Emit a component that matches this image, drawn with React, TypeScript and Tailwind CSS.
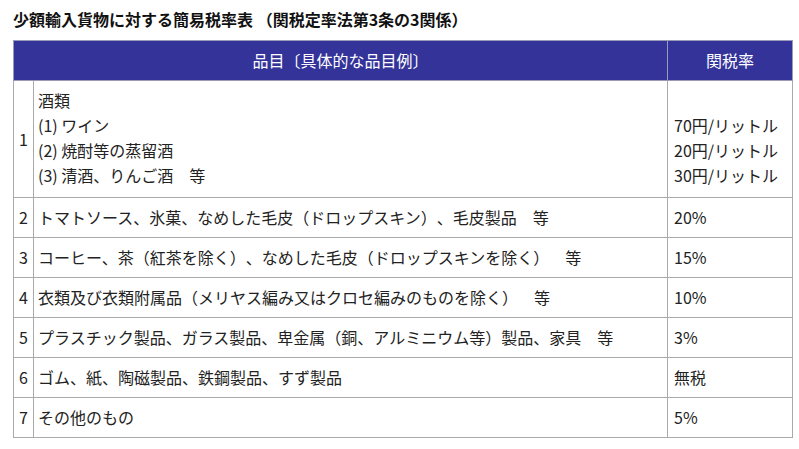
const rows: { no: string; item: React.ReactNode; rate: React.ReactNode }[] = [
  {
    no: '2',
    item: 'トマトソース、氷菓、なめした毛皮（ドロップスキン）、毛皮製品　等',
    rate: '20%',
  },
  {
    no: '3',
    item: 'コーヒー、茶（紅茶を除く）、なめした毛皮（ドロップスキンを除く）　等',
    rate: '15%',
  },
  {
    no: '4',
    item: '衣類及び衣類附属品（メリヤス編み又はクロセ編みのものを除く）　等',
    rate: '10%',
  },
  {
    no: '5',
    item: 'プラスチック製品、ガラス製品、卑金属（銅、アルミニウム等）製品、家具　等',
    rate: '3%',
  },
  { no: '6', item: 'ゴム、紙、陶磁製品、鉄鋼製品、すず製品', rate: '無税' },
  { no: '7', item: 'その他のもの', rate: '5%' },
];

export default function App() {
  return (
    <div
      className="w-[799px] h-[449px] bg-white text-[#222] pt-[9px] [text-spacing-trim:space-all]"
      style={{ fontFamily: '"Noto Sans CJK JP", "Noto Sans", sans-serif' }}
    >
      <h2 className="ml-[13px] text-[16px] font-bold leading-[20px] text-[#111]">
        少額輸入貨物に対する簡易税率表 （関税定率法第3条の3関係）
      </h2>
      <table className="ml-[13px] mt-[11px] w-[780px] border-collapse text-[16px] leading-[25px]">
        <thead>
          <tr className="h-[40px] bg-[#333399] text-white">
            <th className="border border-[#9a9ab8] font-normal p-0" colSpan={2}>
              品目〔具体的な品目例〕
            </th>
            <th className="w-[125px] border border-[#9a9ab8] font-normal p-0">関税率</th>
          </tr>
        </thead>
        <tbody>
          <tr className="h-[117px]">
            <td className="w-[20px] border border-[#aaaaaa] text-center align-middle">1</td>
            <td className="border border-[#aaaaaa] pl-[4px] pb-[2px] align-middle">
              酒類
              <br />
              (1) ワイン
              <br />
              (2) 焼酎等の蒸留酒
              <br />
              (3) 清酒、りんご酒　等
            </td>
            <td className="border border-[#aaaaaa] pl-[6px] pb-[2px] align-middle">
              <br />
              70円/リットル
              <br />
              20円/リットル
              <br />
              30円/リットル
            </td>
          </tr>
          {rows.map((r) => (
            <tr key={r.no} className="h-[40px]">
              <td className="border border-[#aaaaaa] text-center">{r.no}</td>
              <td className="border border-[#aaaaaa] pl-[4px]">{r.item}</td>
              <td className="border border-[#aaaaaa] pl-[6px]">{r.rate}</td>
            </tr>
          ))}
        </tbody>
      </table>
    </div>
  );
}
